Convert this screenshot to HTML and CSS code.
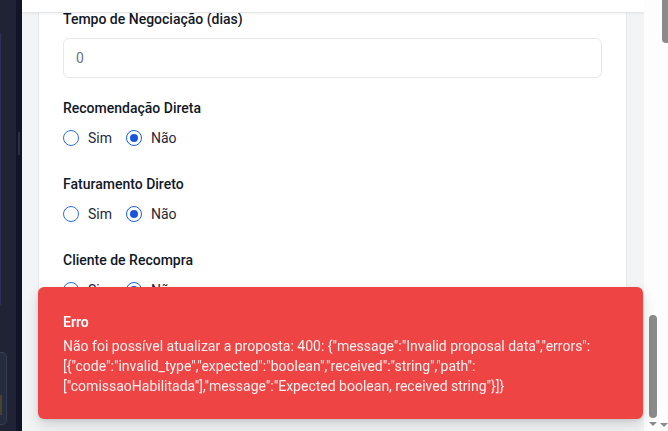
FILE: index.html
```html
<!DOCTYPE html>
<html lang="pt-BR">
<head>
<meta charset="utf-8">
<title>Proposta</title>
<link rel="stylesheet" href="styles.css">
</head>
<body>
<div class="app">
  <aside class="sidebar">
    <div class="side-panel"></div>
    <div class="side-box"><span class="side-chip"></span></div>
  </aside>
  <div class="rail"><span class="rail-thumb"></span></div>
  <main class="main">
    <div class="topbar"></div>
    <div class="content">
      <section class="card">
        <div class="field">
          <div class="label">Tempo de Negociação (dias)</div>
          <div class="input">0</div>
        </div>
        <div class="field">
          <div class="label">Recomendação Direta</div>
          <div class="radios">
            <span class="opt"><span class="radio"></span>Sim</span>
            <span class="opt"><span class="radio checked"></span>Não</span>
          </div>
        </div>
        <div class="field">
          <div class="label">Faturamento Direto</div>
          <div class="radios">
            <span class="opt"><span class="radio"></span>Sim</span>
            <span class="opt"><span class="radio checked"></span>Não</span>
          </div>
        </div>
        <div class="field">
          <div class="label">Cliente de Recompra</div>
          <div class="radios">
            <span class="opt"><span class="radio"></span>Sim</span>
            <span class="opt"><span class="radio checked"></span>Não</span>
          </div>
        </div>
      </section>
    </div>
  </main>
  <div class="scrollcol">
    <div class="sb sb-inner"><span class="thumb"></span><span class="arrow"></span></div>
    <div class="sb sb-outer"><span class="thumb"></span><span class="arrow"></span></div>
  </div>
</div>
<div class="toast" role="alert">
  <div class="toast-title">Erro</div>
  <div class="toast-desc">Não foi possível atualizar a proposta: 400: {"message":"Invalid proposal data","errors":[{"code":"invalid_type","expected":"boolean","received":"string","path":["comissaoHabilitada"],"message":"Expected boolean, received string"}]}</div>
</div>
</body>
</html>
```
FILE: styles.css
```css
* { box-sizing: border-box; }
html, body { margin: 0; height: 100%; overflow: hidden; }
body {
  font-family: Roboto, "Liberation Sans", Arial, sans-serif;
  font-size: 14px;
  line-height: 20px;
  color: #1f2937;
  background: #f3f4f6;
}
.app { display: flex; height: 431px; }

.sidebar {
  width: 16px;
  flex: none;
  background: #1f2334;
  display: flex;
  flex-direction: column;
  padding: 33px 0 6px;
}
.side-panel {
  height: 272px;
  border-left: 1px solid #2c2f58;
}
.side-box {
  margin-top: auto;
  width: 7px;
  height: 73px;
  background: #272b3e;
  border: 1px solid #373d54;
  border-left: none;
  border-radius: 0 5px 5px 0;
  padding-top: 42px;
}
.side-chip { display: block; width: 2px; height: 20px; background: #4a4330; }

.rail {
  width: 6px;
  flex: none;
  background: #12152a;
  padding: 132px 0 0 2px;
}
.rail-thumb { display: block; width: 2px; height: 23px; background: #2b3048; }

.main {
  width: 622px;
  flex: none;
  position: relative;
  background: #f3f4f6;
  overflow: hidden;
}
.topbar {
  position: absolute;
  left: 0; right: 0; top: 0;
  height: 13px;
  background: #fff;
  border-bottom: 1px solid #e3e5e8;
  box-shadow: 0 1px 2px rgba(0,0,0,0.05);
  z-index: 2;
}
.content { padding: 0 17px 0 16px; }
.card {
  background: #fff;
  border: 1px solid #e5e7eb;
  border-top: none;
  padding: 9px 24px 24px;
}
.field { display: flex; flex-direction: column; }
.field + .field { margin-top: 26px; }
.field:nth-child(2) { margin-top: 20px; }
.label {
  font-weight: 500;
  color: #111827;
  line-height: 20px;
}
.input {
  margin-top: 9px;
  height: 40px;
  border: 1px solid #e5e7eb;
  border-radius: 6px;
  padding: 0 12px;
  display: flex;
  align-items: center;
  color: #6b7280;
}
.radios {
  margin-top: 10px;
  display: flex;
  gap: 14px;
  height: 20px;
  align-items: center;
}
.opt { display: flex; align-items: center; gap: 9px; color: #1f2937; }
.radio {
  width: 16px; height: 16px;
  border-radius: 50%;
  border: 1.5px solid #2f6fe0;
  background: #fff;
  flex: none;
  position: relative;
}
.radio.checked { border-color: #1d5fe0; }
.radio.checked::after {
  content: "";
  position: absolute;
  left: 2.5px; top: 2.5px;
  width: 8px; height: 8px;
  border-radius: 50%;
  background: #1a56db;
}

.scrollcol {
  flex: 1;
  display: flex;
  background: #fdfdfd;
}
.sb { display: flex; flex-direction: column; align-items: center; }
.sb .thumb { display: block; background: #8b8b8b; border-radius: 4px; }
.sb .arrow {
  width: 0; height: 0;
  border-left: 4px solid transparent;
  border-right: 4px solid transparent;
  border-top: 4px solid #8b8b8b;
}
.sb-inner { width: 15px; padding: 315px 0 0 3px; }
.sb-inner .thumb { width: 8px; height: 103px; }
.sb-inner .arrow { margin-top: 4px; }
.sb-outer { flex: 1; align-items: flex-end; justify-content: space-between; padding-bottom: 4px; }
.sb-outer .thumb { width: 6px; height: 43px; border-radius: 0 0 0 4px; }
.sb-outer .arrow { margin-right: 0; }

.toast {
  position: fixed;
  left: 38px;
  top: 287px;
  width: 605px;
  height: 132px;
  background: #ef4444;
  color: #fff;
  border-radius: 6px;
  padding: 25px 25px 23px;
  box-shadow: 0 6px 14px rgba(0,0,0,0.14), 0 2px 4px rgba(0,0,0,0.08);
  z-index: 10;
}
.toast-title { font-weight: 600; line-height: 20px; }
.toast-desc { margin-top: 4px; line-height: 20px; color: rgba(255,255,255,0.92); }
```
